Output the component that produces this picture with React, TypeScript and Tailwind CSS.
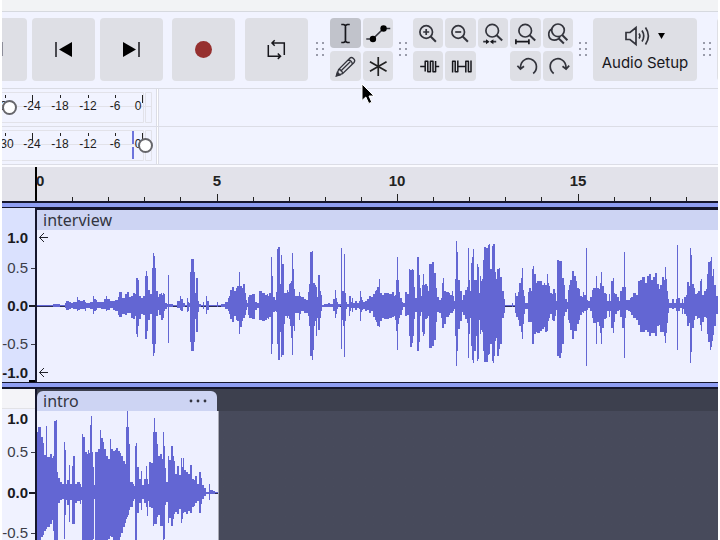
import type { ReactNode } from 'react'

type Sample = [x: number, up: number, down: number]

// start of each step, height above the zero line, height below it
const INTERVIEW: Sample[] = [
  [37, 0, 0], [53, 1, 1], [60, 0, 0], [65, 2, 2], [66, 4, 4], [69, 3, 3], [71, 2, 2], [73, 3, 3], [77, 8, 5], [78, 5, 4],
  [80, 4, 3], [83, 5, 3], [85, 3, 5], [86, 2, 2], [90, 3, 3], [93, 9, 8], [94, 6, 5], [96, 5, 4], [97, 3, 2], [101, 3, 3],
  [104, 6, 3], [106, 9, 5], [107, 6, 4], [110, 4, 2], [113, 4, 4], [115, 5, 5], [118, 8, 9], [119, 13, 11], [122, 7, 8], [125, 11, 9],
  [127, 13, 7], [129, 8, 7], [131, 9, 12], [133, 12, 13], [135, 11, 10], [136, 27, 28], [137, 27, 31], [138, 25, 20], [139, 9, 13], [141, 7, 8],
  [143, 9, 9], [145, 29, 33], [146, 34, 33], [147, 29, 25], [148, 15, 14], [150, 11, 8], [152, 37, 38], [153, 52, 50], [154, 49, 47], [155, 37, 38],
  [156, 14, 10], [158, 8, 4], [159, 11, 9], [161, 12, 14], [162, 10, 14], [163, 12, 12], [164, 11, 5], [165, 2, 3], [167, 1, 1], [168, 30, 37],
  [169, 1, 1], [173, 0, 0], [177, 4, 2], [180, 9, 4], [181, 6, 5], [183, 2, 1], [185, 0, 0], [187, 7, 6], [188, 3, 5], [189, 2, 1],
  [190, 33, 36], [191, 46, 45], [194, 33, 36], [195, 12, 13], [196, 27, 26], [198, 4, 6], [199, 1, 1], [201, 0, 0], [203, 3, 3], [204, 0, 0],
  [206, 9, 8], [207, 4, 4], [209, 0, 0], [217, 3, 1], [218, 0, 0], [221, 1, 1], [225, 3, 3], [228, 7, 5], [229, 9, 8], [230, 15, 13],
  [232, 18, 16], [234, 14, 10], [236, 17, 14], [237, 19, 15], [239, 33, 28], [240, 19, 21], [242, 17, 15], [243, 21, 12], [245, 12, 9], [246, 5, 4],
  [247, 2, 1], [248, 8, 9], [249, 10, 12], [252, 11, 13], [255, 3, 4], [257, 2, 2], [259, 14, 14], [262, 12, 15], [265, 10, 14], [267, 11, 12],
  [268, 9, 13], [269, 12, 11], [271, 48, 48], [272, 29, 38], [273, 8, 6], [275, 5, 5], [276, 13, 6], [277, 56, 38], [278, 58, 54], [280, 21, 26],
  [281, 50, 51], [282, 41, 49], [284, 12, 18], [285, 12, 10], [287, 15, 12], [288, 13, 10], [289, 21, 13], [290, 22, 20], [291, 24, 32], [292, 52, 49],
  [293, 36, 20], [294, 16, 25], [295, 9, 7], [299, 13, 14], [300, 9, 8], [301, 8, 5], [304, 6, 7], [306, 5, 7], [308, 13, 10], [309, 21, 20],
  [310, 53, 50], [312, 54, 54], [313, 22, 44], [314, 22, 20], [315, 20, 15], [316, 18, 30], [317, 8, 12], [318, 30, 24], [320, 14, 12], [321, 10, 5],
  [322, 0, 1], [324, 1, 1], [328, 2, 1], [330, 1, 1], [333, 6, 5], [335, 15, 12], [336, 7, 8], [337, 3, 3], [338, 1, 1], [340, 1, 0],
  [341, 57, 43], [342, 14, 14], [343, 14, 20], [344, 51, 51], [345, 12, 15], [346, 3, 3], [347, 1, 1], [349, 9, 10], [350, 9, 5], [351, 3, 2],
  [352, 7, 6], [353, 2, 2], [355, 4, 4], [357, 2, 2], [359, 4, 3], [360, 14, 15], [361, 8, 6], [362, 5, 4], [363, 3, 3], [365, 4, 5],
  [367, 6, 4], [369, 9, 7], [371, 8, 5], [373, 11, 11], [375, 14, 14], [376, 15, 16], [377, 18, 20], [379, 26, 21], [380, 12, 15], [382, 10, 12],
  [384, 12, 13], [389, 11, 12], [392, 13, 11], [394, 9, 10], [395, 10, 14], [396, 25, 25], [397, 48, 44], [398, 25, 18], [399, 13, 12], [400, 7, 9],
  [402, 3, 4], [403, 2, 1], [405, 13, 10], [407, 11, 9], [409, 36, 30], [410, 35, 41], [412, 36, 37], [413, 35, 30], [414, 18, 13], [415, 7, 6],
  [417, 48, 45], [419, 30, 36], [420, 17, 10], [421, 9, 6], [422, 20, 26], [423, 31, 30], [424, 20, 28], [425, 21, 13], [427, 19, 12], [428, 14, 10],
  [429, 41, 42], [432, 43, 40], [434, 32, 34], [436, 17, 16], [437, 8, 6], [439, 5, 7], [441, 7, 12], [442, 22, 22], [443, 27, 22], [444, 14, 18],
  [446, 13, 11], [449, 12, 9], [450, 10, 7], [452, 14, 7], [453, 9, 5], [454, 4, 3], [455, 26, 30], [456, 64, 60], [457, 53, 45], [458, 25, 23],
  [460, 14, 15], [462, 5, 6], [463, 10, 9], [465, 15, 13], [467, 18, 17], [468, 57, 52], [469, 25, 28], [470, 14, 12], [471, 42, 40], [472, 48, 54],
  [473, 56, 57], [474, 25, 45], [476, 25, 30], [477, 41, 55], [478, 38, 53], [479, 12, 14], [480, 29, 28], [481, 24, 24], [482, 26, 26], [483, 45, 45],
  [484, 58, 56], [486, 57, 56], [488, 60, 49], [489, 61, 48], [490, 36, 38], [492, 59, 55], [493, 61, 57], [494, 61, 50], [495, 33, 35], [496, 26, 32],
  [497, 36, 50], [499, 37, 43], [500, 28, 38], [502, 14, 12], [504, 6, 7], [505, 0, 0], [512, 2, 1], [513, 0, 0], [515, 12, 7], [516, 9, 11],
  [518, 13, 14], [519, 22, 20], [521, 27, 26], [522, 37, 33], [523, 15, 18], [524, 9, 8], [525, 2, 3], [528, 13, 16], [529, 17, 16], [531, 14, 16],
  [532, 36, 38], [533, 39, 38], [534, 31, 28], [536, 22, 26], [537, 24, 27], [540, 24, 25], [542, 20, 23], [544, 22, 21], [545, 20, 26], [547, 31, 25],
  [548, 22, 15], [549, 19, 12], [550, 12, 8], [552, 11, 14], [553, 16, 15], [555, 12, 10], [556, 4, 4], [557, 45, 50], [559, 44, 52], [561, 44, 47],
  [562, 27, 38], [564, 20, 10], [565, 6, 6], [567, 3, 3], [568, 15, 14], [569, 20, 17], [570, 25, 24], [572, 34, 33], [574, 29, 25], [576, 24, 25],
  [577, 17, 18], [579, 16, 14], [580, 9, 9], [582, 8, 6], [583, 13, 7], [584, 10, 5], [586, 57, 60], [587, 5, 4], [588, 4, 2], [590, 8, 5],
  [592, 15, 12], [593, 17, 17], [596, 29, 38], [597, 17, 16], [599, 16, 20], [600, 22, 27], [601, 33, 38], [602, 19, 22], [604, 12, 13], [606, 11, 12],
  [607, 4, 5], [609, 11, 11], [610, 4, 5], [611, 24, 22], [613, 27, 27], [614, 12, 16], [615, 11, 8], [617, 8, 5], [619, 4, 4], [620, 14, 11],
  [622, 18, 22], [624, 53, 52], [625, 18, 12], [626, 5, 4], [628, 5, 5], [630, 7, 6], [631, 8, 9], [633, 12, 12], [636, 10, 14], [638, 24, 19],
  [640, 25, 26], [642, 28, 26], [645, 22, 24], [647, 29, 26], [649, 31, 30], [651, 25, 27], [653, 28, 27], [655, 32, 30], [657, 21, 20], [659, 16, 19],
  [660, 20, 26], [662, 28, 26], [664, 25, 30], [665, 38, 37], [666, 26, 27], [667, 14, 17], [668, 6, 7], [669, 2, 2], [672, 6, 3], [674, 2, 2],
  [676, 6, 5], [677, 60, 44], [678, 7, 5], [680, 2, 2], [682, 6, 8], [683, 2, 3], [684, 8, 8], [686, 10, 10], [687, 23, 20], [689, 19, 17],
  [690, 57, 57], [691, 50, 46], [692, 21, 22], [694, 17, 14], [695, 11, 10], [697, 12, 13], [698, 14, 12], [700, 24, 19], [701, 26, 25], [702, 10, 16],
  [704, 14, 11], [706, 16, 12], [707, 31, 28], [708, 43, 36], [710, 44, 44], [711, 48, 41], [712, 29, 35], [713, 36, 29], [714, 20, 20], [716, 9, 8],
  [718, 0, 0],
]

const INTRO: Sample[] = [
  [37, 60, 50], [38, 65, 47], [41, 55, 44], [43, 49, 42], [44, 37, 38], [46, 66, 36], [47, 35, 34], [50, 38, 31], [52, 34, 27], [53, 36, 38],
  [54, 71, 50], [56, 72, 50], [57, 20, 50], [58, 14, 10], [60, 10, 7], [62, 8, 6], [64, 50, 46], [65, 42, 22], [66, 8, 7], [67, 12, 12],
  [69, 27, 29], [70, 8, 7], [72, 26, 31], [73, 36, 31], [75, 8, 10], [77, 10, 8], [80, 8, 11], [81, 5, 7], [82, 58, 50], [83, 55, 50],
  [85, 40, 50], [87, 38, 50], [88, 42, 50], [89, 39, 50], [90, 67, 50], [91, 76, 50], [92, 40, 50], [93, 25, 46], [94, 7, 6], [95, 40, 47],
  [97, 40, 50], [98, 43, 50], [100, 62, 50], [101, 54, 50], [103, 50, 50], [104, 43, 50], [106, 36, 48], [108, 33, 46], [110, 53, 43], [111, 43, 44],
  [113, 41, 48], [115, 42, 50], [116, 44, 50], [118, 41, 47], [120, 39, 44], [121, 36, 40], [123, 31, 34], [125, 28, 30], [126, 65, 26], [127, 82, 24],
  [128, 65, 22], [129, 48, 17], [130, 10, 14], [133, 8, 8], [134, 6, 6], [135, 46, 50], [136, 49, 50], [137, 25, 20], [139, 13, 10], [141, 21, 17],
  [142, 7, 6], [144, 13, 10], [146, 26, 14], [147, 13, 23], [148, 8, 8], [149, 30, 14], [151, 29, 15], [153, 60, 33], [154, 74, 31], [155, 60, 31],
  [157, 48, 24], [158, 36, 22], [160, 38, 33], [162, 33, 33], [163, 60, 50], [164, 46, 46], [165, 24, 12], [166, 10, 9], [168, 36, 30], [169, 32, 25],
  [171, 46, 33], [173, 36, 26], [174, 31, 21], [175, 18, 19], [177, 26, 21], [179, 17, 16], [181, 34, 30], [182, 25, 26], [183, 34, 20], [184, 22, 19],
  [186, 20, 21], [188, 18, 18], [190, 27, 20], [192, 13, 14], [194, 12, 13], [195, 16, 10], [197, 8, 8], [199, 20, 20], [201, 14, 11], [202, 7, 6],
  [204, 4, 3], [206, 0, 1], [209, 8, 7], [210, 2, 1], [213, 1, 1], [215, 0, 0], [218, 0, 0],
]

function wavePath(samples: Sample[], mid: number) {
  const top = samples.slice(0, -1).map(([x, up], i) => `L${x} ${mid - up}H${samples[i + 1][0]}`)
  const bottom = samples.slice(0, -1).map(([x, , down], i) => `L${samples[i + 1][0]} ${mid + 1 + down}H${x}`).reverse()
  return `M${samples[0][0]} ${mid}${top.join('')}${bottom.join('')}Z`
}

function Waveform({ samples, mid, viewBox, className }: { samples: Sample[]; mid: number; viewBox: string; className: string }) {
  return (
    <svg viewBox={viewBox} preserveAspectRatio="none" className={className} aria-hidden="true">
      <path d={`M37 ${mid + 1}H720`} stroke="#2c2d55" strokeWidth="2" />
      <path d={wavePath(samples, mid)} fill="#6366d3" />
    </svg>
  )
}

function Grip() {
  return (
    <svg width="10" height="16" viewBox="0 0 10 16" fill="#9a9cab" className="shrink-0" aria-hidden="true">
      {[1, 7, 13].map(y => (
        <g key={y}>
          <rect x="1" y={y} width="2" height="2" />
          <rect x="7" y={y} width="2" height="2" />
        </g>
      ))}
    </svg>
  )
}

function BigButton({ label, children }: { label: string; children: ReactNode }) {
  return (
    <button aria-label={label} className="w-[63px] h-[63px] shrink-0 rounded bg-[#dedfe5]">
      <svg width="63" height="63" viewBox="0 0 63 63" fill="none" stroke="#17171c" strokeWidth="1.5">
        {children}
      </svg>
    </button>
  )
}

function ToolButton({ label, active, children }: { label: string; active?: boolean; children: ReactNode }) {
  return (
    <button aria-label={label} className={`h-[30px] rounded ${active ? 'bg-[#c1c3cb]' : 'bg-[#dedfe5]'}`}>
      <svg viewBox="0 0 30 30" fill="none" stroke="#33343c" strokeWidth="1.7" className="w-full h-[30px]">
        {children}
      </svg>
    </button>
  )
}

const SCALE: [number, string][] = [[3, '-30'], [30, '-24'], [58, '-18'], [86, '-12'], [113, '-6'], [140, '0']]

function Meter({ label, level, peak }: { label: string; level: number; peak?: boolean }) {
  return (
    <div className="flex h-[38px] border-b border-[#dcdde6]">
      <div className="relative w-[151px] shrink-0">
        <svg width="151" height="37" className="block" aria-hidden="true">
          <path d="M0 3.5H141.5V33.5H0M143.5 3.5H149.5V33.5H143.5ZM0 17.5H149" fill="none" stroke="#e2e2e9" />
          {SCALE.map(([x, text], i) => (
            <g key={text}>
              <rect x={x} y="6" width="1" height={i === 1 || i === 5 ? 8 : 3} fill="#222" />
              <text
                x={text === '0' ? 136 : x}
                y="21"
                textAnchor="middle"
                fill="#1d1d22"
                className="text-[12px] font-['Liberation_Sans',sans-serif]"
              >
                {text}
              </text>
            </g>
          ))}
          {peak && <path d="M131 4V17M131 20V32" stroke="#6d74dc" strokeWidth="2" />}
        </svg>
        <input
          type="range"
          aria-label={label}
          defaultValue={level}
          className="absolute left-0 top-[10px] w-full h-4 m-0 appearance-none bg-transparent [&::-webkit-slider-thumb]:appearance-none [&::-webkit-slider-thumb]:w-[15px] [&::-webkit-slider-thumb]:h-[15px] [&::-webkit-slider-thumb]:rounded-full [&::-webkit-slider-thumb]:border-2 [&::-webkit-slider-thumb]:border-solid [&::-webkit-slider-thumb]:border-[#66666b] [&::-webkit-slider-thumb]:bg-white"
        />
      </div>
      <div className="w-[3px] ml-[3px] border-x border-[#dcdde6] bg-white" />
    </div>
  )
}

function Ruler() {
  return (
    <svg className="block w-full h-[34px] bg-[#e2e2ea]" aria-label="Timeline">
      <rect x="33" y="0" width="2" height="34" fill="#000" />
      {Array.from({ length: 19 }, (_, i) => {
        const x = Math.round(34 + i * 36.1)
        const major = i % 5 === 0
        return (
          <g key={i} fill="#222">
            {i > 0 && <rect x={x} y={major ? 27 : 30} width="1" height={major ? 7 : 4} />}
            {major && (
              <text
                x={x}
                y="19"
                textAnchor={i === 0 ? 'start' : 'middle'}
                className="text-[15px] font-bold font-['Liberation_Sans',sans-serif]"
              >
                {i}
              </text>
            )}
          </g>
        )
      })}
    </svg>
  )
}

function Axis({ marks, end, className }: { marks: [string, number][]; end?: number; className: string }) {
  return (
    <svg className={className} aria-label="Amplitude">
      {marks.map(([text, y]) => {
        const bold = text.endsWith('.0')
        return (
          <g key={text} fill={bold ? '#1a1a22' : '#3c3d48'}>
            <text
              x="26"
              y={y + 5}
              textAnchor="end"
              className={`text-[15px] font-['Liberation_Sans',sans-serif] ${bold ? 'font-bold' : ''}`}
            >
              {text}
            </text>
            {text === '0.0' && <rect x="27" y={y - 1} width="7" height="2" />}
            {!bold && <rect x="29" y={y} width="4" height="1" />}
          </g>
        )
      })}
      {end && <rect x="27" y={end} width="7" height="2" />}
    </svg>
  )
}

export default function App() {
  return (
    <div className="h-screen overflow-hidden bg-white px-[2px]">
      <div className="relative flex flex-col h-full overflow-hidden bg-[#f1f3ff] text-[#17171c]">
        <div className="h-3 shrink-0 bg-[#f2f3f5] border-b border-[#d6d9df]" />

        {/* Toolbar */}
        <div className="flex items-center h-[77px] pb-[2px] shrink-0 overflow-hidden border-b border-[#d9dbe3]">
          <button aria-label="Stop" className="w-[25px] h-[63px] shrink-0 rounded-r bg-[#dedfe5]">
            <span className="block w-px h-[14px] bg-[#8d8e9a]" />
          </button>
          <div className="flex gap-[5px] ml-[5px]">
            <BigButton label="Skip to start">
              <path d="M24 24V39" />
              <path d="M27 31.5L40 24V39Z" fill="#000" stroke="none" />
            </BigButton>
            <BigButton label="Skip to end">
              <path d="M23 24L36 31.5L23 39Z" fill="#000" stroke="none" />
              <path d="M39 24V39" />
            </BigButton>
          </div>
          <div className="flex gap-[10px] ml-[9px]">
            <BigButton label="Record">
              <circle cx="31.5" cy="31.5" r="8.5" fill="#96302f" stroke="none" />
            </BigButton>
            <BigButton label="Loop">
              <path d="M39.3 37V25H27M29.7 22.3L27 25L29.7 27.7M23.3 27V38.2H35.5M32.8 35.5L35.5 38.2L32.8 40.9" />
            </BigButton>
          </div>
          <div className="flex items-center gap-[5px] ml-[7px]">
            <Grip />
            <div className="grid grid-cols-2 gap-x-[2px] gap-y-[3px] w-[63px]">
              <ToolButton label="Selection tool" active>
                <path d="M11 6.5H13.5L15.2 7.5L17 6.5H19.5M15.2 7.5V23.5M11 24.5H13.5L15.2 23.5L17 24.5H19.5" stroke="#17171c" />
              </ToolButton>
              <ToolButton label="Envelope tool">
                <path d="M3 21H9.5L20.3 10.5H27" />
                <g fill="#000" stroke="none">
                  <circle cx="9.7" cy="21" r="3.2" />
                  <circle cx="20.3" cy="10.5" r="3.2" />
                </g>
              </ToolButton>
              <ToolButton label="Draw tool">
                <path d="M6.5 24.5L8.3 18.5L19.5 7.2C21.5 5.3 26 8.5 23.8 11.5L12.3 22.7ZM8.3 18.5C10.5 18.5 12.3 20.5 12.3 22.7M17.8 9C20.3 9 22 11 22 13.2M10.3 20.3L20 10.8" strokeWidth="1.3" />
                <path d="M6.3 24.7L7.2 21.6L9.4 23.8Z" fill="#222" />
              </ToolButton>
              <ToolButton label="Multi-tool">
                <path d="M15 6V25M6.7 10.8L23.3 20.2M6.7 20.2L23.3 10.8" stroke="#222" />
              </ToolButton>
            </div>
          </div>
          <div className="flex items-center gap-[5px] ml-[5px]">
            <Grip />
            <div className="grid grid-cols-5 gap-x-[2px] gap-y-[3px] w-[160px]">
              <ToolButton label="Zoom in">
                <path d="M17.5 18.5L22.7 23.8" strokeWidth="2" />
                <circle cx="13" cy="14" r="6.3" />
                <path d="M10 14H16M13 11V17" />
              </ToolButton>
              <ToolButton label="Zoom out">
                <path d="M17.5 18.5L22.7 23.8" strokeWidth="2" />
                <circle cx="13" cy="14" r="6.3" />
                <path d="M10 14H16" />
              </ToolButton>
              <ToolButton label="Fit selection to width">
                <path d="M18.5 17.2L24 22.5" strokeWidth="2" />
                <circle cx="14" cy="12.7" r="6.3" />
                <path d="M5 23.7H10M18 23.7H13" />
                <path d="M7.8 21.2L11.3 23.7L7.8 26.2ZM15.2 21.2L11.7 23.7L15.2 26.2Z" fill="#17171c" stroke="none" />
              </ToolButton>
              <ToolButton label="Fit project to width">
                <path d="M19.5 17.2L25 22.5" strokeWidth="2" />
                <circle cx="15" cy="12.7" r="6.3" />
                <path d="M5.7 21.2V26.2M18.7 21.2V26.2M6 23.7H18.5" stroke="#17171c" />
              </ToolButton>
              <ToolButton label="Zoom toggle">
                <path d="M19 17L24.2 22.2M15.5 20.5L20.7 25.5" strokeWidth="2" />
                <circle cx="14.8" cy="12.3" r="6.3" />
                <path d="M9 10.8C3.8 13.5 4.5 22 11 22.2C13.5 22.2 16 20.8 16.8 18.3" />
              </ToolButton>
              <ToolButton label="Trim outside selection">
                <path d="M7 15.5H11.5M12 20.5V10.2H14.6V20.8H17.2V10.2H19.8V20.8H22.4V10M22.4 15.5H26" stroke="#17171c" strokeWidth="1.5" strokeLinejoin="round" />
              </ToolButton>
              <ToolButton label="Silence selection">
                <path d="M7.4 21.5V10.2H10V20.8H12.6V9.5M12.6 15.5H20.6M20.6 21.5V10.2H23.2V20.8H25.8V9.5" stroke="#17171c" strokeWidth="1.5" strokeLinejoin="round" />
              </ToolButton>
              <span />
              <ToolButton label="Undo">
                <path d="M23 22.5C27.5 19 27.3 12 22.5 9C17 5.5 10.3 9.5 10.2 16.8M7.2 14.7L10.2 18L13.8 15.3" />
              </ToolButton>
              <ToolButton label="Redo">
                <path d="M10.5 22.5C6 19 5.7 12 10.5 9C16 5.5 22.8 9.5 22.9 16.8M19.3 15.3L22.9 18L26 14.7" />
              </ToolButton>
            </div>
          </div>
          <div className="flex items-center gap-[5px] ml-[5px]">
            <Grip />
            <button className="flex flex-col items-center justify-center gap-[6px] w-[104px] h-[63px] shrink-0 rounded bg-[#dedfe5]">
              <span className="flex items-center gap-2">
                <svg width="25" height="22" viewBox="0 0 25 22" fill="none" stroke="#33343c" strokeWidth="1.7" aria-hidden="true">
                  <path d="M1 7.5H5L11 2.5V19.5L5 14.5H1ZM14 8.5Q15.8 11 14 13.5M17 5.5Q20.5 11 17 16.5M20.5 2.5Q26.3 11 20.5 19.5" />
                </svg>
                <svg width="7" height="6" viewBox="0 0 8 7" aria-hidden="true">
                  <path d="M0 0H8L4 7Z" />
                </svg>
              </span>
              <span className="text-[15px] leading-5 whitespace-nowrap font-['Inter',sans-serif]">Audio Setup</span>
            </button>
            <Grip />
            <div className="w-[63px] h-[63px] shrink-0 rounded bg-[#dedfe5]" />
          </div>
        </div>

        {/* Meters */}
        <div className="shrink-0 border-b-2 border-[#fafaff]">
          <Meter label="Recording level" level={0} />
          <Meter label="Playback level" level={100} peak />
        </div>

        <div className="shrink-0">
          <Ruler />
        </div>
        <div className="h-[7px] shrink-0 border-t-2 border-b border-[#15162c] bg-[#8f9ef2]" />

        {/* Track 1 */}
        <div className="flex h-[174px] shrink-0">
          <Axis
            marks={[['1.0', 30], ['0.5', 60], ['0.0', 98], ['-0.5', 136], ['-1.0', 165]]}
            end={172}
            className="w-[33px] h-[174px] shrink-0 bg-[#dae1fe]"
          />
          <div className="flex-1 min-w-0 border-l-2 border-t-2 border-[#15162c] bg-[#eef0ff]">
            <h2 className="h-5 pl-[6px] bg-[#cdd4f3] text-[16px] leading-5 text-[#33343f] font-['Noto_Sans',sans-serif]">
              interview
            </h2>
            <div className="relative">
              <Waveform samples={INTERVIEW} mid={75} viewBox="37 0 681 152" className="block w-full h-[152px]" />
              {/* vertical range handles */}
              <svg width="11" height="152" className="absolute left-px top-0" fill="none" stroke="#22232b" aria-hidden="true">
                <path d="M10 7.5H1.5M6 3L1.5 7.5L6 12M10 142.5H1.5M6 138L1.5 142.5L6 147" />
              </svg>
            </div>
          </div>
        </div>
        <div className="h-[7px] shrink-0 border-t border-b-2 border-[#15162c] bg-[#8f9ef2]" />

        {/* Track 2 */}
        <div className="flex flex-1 min-h-0 overflow-hidden bg-[#474a5b]">
          <div className="w-[33px] h-full shrink-0 overflow-hidden bg-[#f0f2ff]">
            <div className="h-5 bg-[#f4f4f8] border-b border-[#e2e2e6]" />
            <Axis
              marks={[['1.0', 10], ['0.5', 43], ['0.0', 84], ['-0.5', 124]]}
              className="w-[33px] h-[240px]"
            />
          </div>
          <div className="flex-1 min-w-0 border-l-2 border-[#15162c] bg-linear-to-b from-[#3d404e] from-[22px] to-[#474a5b] to-[22px] pt-[2px]">
            <div className="w-[182px]">
              <div className="flex items-center justify-between w-[180px] h-5 px-[6px] rounded-t-md bg-[#cdd4f3]">
                <h2 className="text-[16px] leading-5 text-[#33343f] font-['Noto_Sans',sans-serif]">intro</h2>
                <button aria-label="Clip menu" className="mr-1">
                  <svg width="18" height="4" viewBox="0 0 18 4" fill="#33343f">
                    <circle cx="2" cy="2" r="1.4" />
                    <circle cx="9" cy="2" r="1.4" />
                    <circle cx="16" cy="2" r="1.4" />
                  </svg>
                </button>
              </div>
              <Waveform
                samples={INTRO}
                mid={81}
                viewBox="37 0 181 160"
                className="block w-full h-[160px] bg-[#eef0ff] border-r border-[#a9aab4]"
              />
            </div>
          </div>
        </div>

        {/* Mouse pointer */}
        <svg width="14" height="22" viewBox="0 0 14 22" className="absolute left-[359px] top-[83px]" aria-hidden="true">
          <path d="M1 1V17.5L4.8 14L7.8 20.5L10.8 19.2L8 13H13Z" fill="#000" stroke="#fff" />
        </svg>
      </div>
    </div>
  )
}
